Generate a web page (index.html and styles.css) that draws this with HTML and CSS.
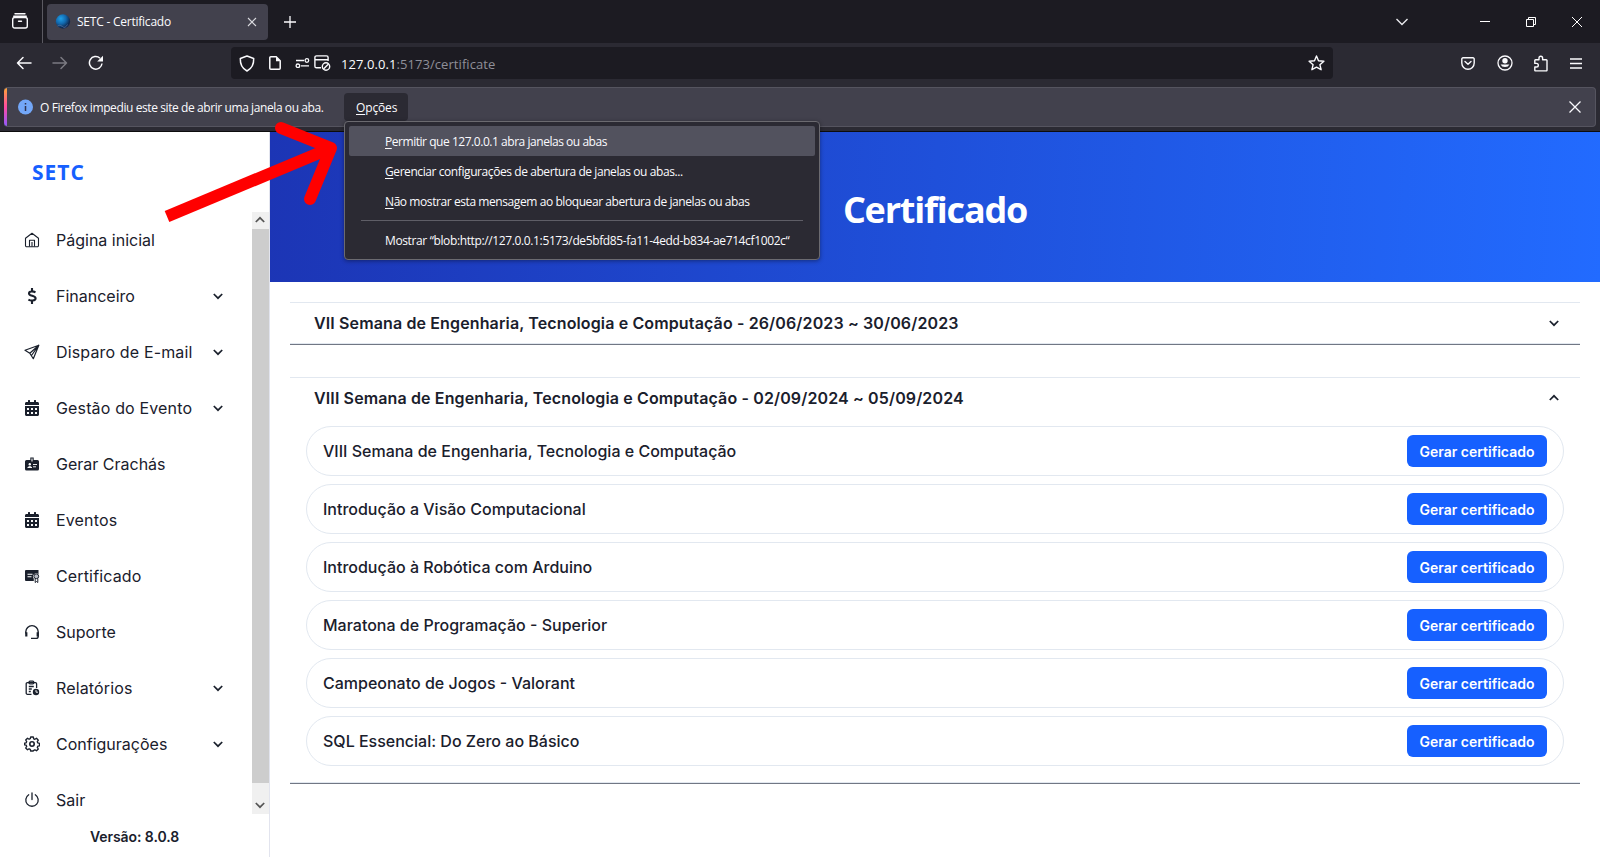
FILE: index.html
```html
<!DOCTYPE html>
<html lang="pt-BR">
<head>
<meta charset="utf-8">
<title>SETC - Certificado</title>
<link rel="stylesheet" href="styles.css">
</head>
<body>
<svg class="defs" width="0" height="0">
  <defs>
    <symbol id="chev" viewBox="0 0 12 12"><path d="M1.800 4l4.200 4.200L10.200 4" fill="none" stroke="currentColor" stroke-width="1.700"/></symbol>
    <symbol id="cal" viewBox="0 0 448 512"><path fill="currentColor" d="M0 464c0 26.500 21.500 48 48 48h352c26.500 0 48-21.500 48-48V192H0v272zm320-196c0-6.600 5.400-12 12-12h40c6.600 0 12 5.400 12 12v40c0 6.600-5.400 12-12 12h-40c-6.600 0-12-5.400-12-12v-40zm0 128c0-6.600 5.400-12 12-12h40c6.600 0 12 5.400 12 12v40c0 6.600-5.400 12-12 12h-40c-6.600 0-12-5.400-12-12v-40zM192 268c0-6.600 5.400-12 12-12h40c6.600 0 12 5.400 12 12v40c0 6.600-5.400 12-12 12h-40c-6.600 0-12-5.400-12-12v-40zm0 128c0-6.600 5.400-12 12-12h40c6.600 0 12 5.400 12 12v40c0 6.600-5.400 12-12 12h-40c-6.600 0-12-5.400-12-12v-40zM64 268c0-6.600 5.400-12 12-12h40c6.600 0 12 5.400 12 12v40c0 6.600-5.400 12-12 12H76c-6.600 0-12-5.400-12-12v-40zm0 128c0-6.600 5.400-12 12-12h40c6.600 0 12 5.400 12 12v40c0 6.600-5.400 12-12 12H76c-6.600 0-12-5.400-12-12v-40zM400 64h-48V16c0-8.800-7.200-16-16-16h-32c-8.800 0-16 7.200-16 16v48H160V16c0-8.800-7.200-16-16-16h-32c-8.800 0-16 7.200-16 16v48H48C21.500 64 0 85.500 0 112v48h448v-48c0-26.500-21.500-48-48-48z"/></symbol>
  </defs>
</svg>

<div class="browser">
  <div class="tabbar">
    <div class="view-btn">
      <svg width="18" height="18" viewBox="0 0 18 18" fill="none" stroke="#fbfbfe" stroke-width="1.400" stroke-linecap="round"><path d="M4 1.700h10M2.700 4.200h12.600"/><rect x="1.700" y="5.500" width="14.600" height="10.500" rx="2"/><path d="M7.500 9.200h3"/></svg>
    </div>
    <div class="tab">
      <svg width="16" height="16" viewBox="0 0 16 16"><defs><radialGradient id="fav" cx=".35" cy=".3" r=".8"><stop offset="0" stop-color="#1fa0e8"/><stop offset=".45" stop-color="#1268ad"/><stop offset=".8" stop-color="#10294f"/><stop offset="1" stop-color="#1c2c55"/></radialGradient></defs><circle cx="8" cy="7.500" r="7.200" fill="url(#fav)"/><path d="M2.500 12q2.500-2 5 .5t5-2" fill="none" stroke="#4d6fa0" stroke-width=".8"/></svg>
      <span class="tab-title">SETC - Certificado</span>
      <svg class="tab-close" width="10" height="10" viewBox="0 0 10 10"><path d="M1 1l8 8M9 1l-8 8" stroke="#d9d9de" stroke-width="1.100"/></svg>
    </div>
    <svg class="tab-new" width="12" height="12" viewBox="0 0 12 12"><path d="M6 0v12M0 6h12" stroke="#fbfbfe" stroke-width="1.300"/></svg>
    <div class="win-btns">
      <svg width="14" height="8" viewBox="0 0 14 8"><path d="M1.500 1L7 6.500 12.500 1" fill="none" stroke="#e8e8ec" stroke-width="1.400"/></svg>
      <svg class="min" width="10" height="10" viewBox="0 0 10 10"><path d="M0 4.500h10" stroke="#fff"/></svg>
      <svg class="max" width="10" height="10" viewBox="0 0 10 10" fill="none" stroke="#fff"><path d="M.5 2.500h7v7h-7zM2.500 2V.5h7v7H8"/></svg>
      <svg class="cls" width="10" height="10" viewBox="0 0 10 10"><path d="M0 0l10 10M10 0L0 10" stroke="#fff"/></svg>
    </div>
  </div>

  <div class="toolbar">
    <div class="nav-btns">
      <svg width="16" height="14" viewBox="0 0 16 14" fill="none" stroke="#fbfbfe" stroke-width="1.500" stroke-linejoin="round" stroke-linecap="round"><path d="M15 7H1.500M7 1.500L1.500 7 7 12.500"/></svg>
      <svg width="16" height="14" viewBox="0 0 16 14" fill="none" stroke="#7b7a82" stroke-width="1.500" stroke-linejoin="round" stroke-linecap="round"><path d="M1 7h13.500M9 1.500L14.500 7 9 12.500"/></svg>
      <svg width="16" height="16" viewBox="0 0 16 16"><path d="M14 8.500A6.300 6.300 0 1 1 12 3.200" fill="none" stroke="#fbfbfe" stroke-width="1.500"/><path d="M15 .8v5.800H9.200z" fill="#fbfbfe"/></svg>
    </div>
    <div class="urlbar">
      <svg class="u1" width="16" height="17" viewBox="0 0 16 17" fill="none" stroke="#fbfbfe" stroke-width="1.500" stroke-linejoin="round"><path d="M8 1L1.300 3.500c-.2 5 1 9.500 6.700 12.500 5.700-3 6.900-7.500 6.700-12.500z"/></svg>
      <svg class="u2" width="12" height="14" viewBox="0 0 12 14"><path d="M1.800.8h5.400l4 4v7.400a1 1 0 0 1-1 1H1.800a1 1 0 0 1-1-1V1.800a1 1 0 0 1 1-1z" fill="none" stroke="#fbfbfe" stroke-width="1.500"/><path d="M7 .8v4.400h4.400z" fill="#fbfbfe"/></svg>
      <svg class="u3" width="15" height="10" viewBox="0 0 15 10" fill="none" stroke="#fbfbfe" stroke-width="1.300"><path d="M1 2.500h8M6 7.800h8"/><circle cx="11.900" cy="2.500" r="1.800"/><circle cx="2.900" cy="7.800" r="1.800"/></svg>
      <svg class="u4" width="17" height="16" viewBox="0 0 17 16" fill="none" stroke="#fbfbfe" stroke-width="1.400"><path d="M7 12.800H2.500a1.600 1.600 0 0 1-1.600-1.600V2.500A1.600 1.600 0 0 1 2.500.9h10a1.600 1.600 0 0 1 1.600 1.600V6M1 4.800h13"/><circle cx="12" cy="11.500" r="3.700"/><path d="M9.500 14l5-5"/></svg>
      <span class="url"><b>127.0.0.1</b>:5173/certificate</span>
      <svg class="star" width="17" height="16" viewBox="0 0 17 16" fill="none" stroke="#fbfbfe" stroke-width="1.400" stroke-linejoin="round"><path d="M8.500 1l2 4.700 5.400.5-4 3.500 1.200 5-4.600-2.600-4.600 2.600 1.200-5-4-3.500 5.400-.5z"/></svg>
    </div>
    <div class="tools">
      <svg width="14" height="13" viewBox="0 0 14 13" fill="none" stroke="#fbfbfe" stroke-width="1.400" stroke-linejoin="round" stroke-linecap="round"><path d="M2 .8h10a1.200 1.200 0 0 1 1.200 1.200v4A6.200 6.200 0 0 1 .8 6V2A1.200 1.200 0 0 1 2 .8z"/><path d="M4 4.500l3 2.800 3-2.800"/></svg>
      <svg width="16" height="16" viewBox="0 0 16 16"><circle cx="8" cy="8" r="7" fill="none" stroke="#fbfbfe" stroke-width="1.300"/><circle cx="8" cy="5.800" r="2.700" fill="#fbfbfe"/><path d="M3.600 9.500h8.800a4.700 4 0 0 1-8.800 0z" fill="#fbfbfe"/></svg>
      <svg width="14" height="17" viewBox="0 0 14 17" fill="none" stroke="#fbfbfe" stroke-width="1.400" stroke-linejoin="round"><path d="M1.500 4.700H5V3a1.800 1.800 0 0 1 3.600 0v1.700h3.700a.7.7 0 0 1 .7.7v9.800a.7.700 0 0 1-.7.7H1.500a.7.700 0 0 1-.7-.7V12h1.700a1.800 1.800 0 0 0 0-3.600H.8v-3a.7.700 0 0 1 .7-.7z"/></svg>
      <svg width="12" height="11" viewBox="0 0 12 11"><path d="M0 1h12M0 5.500h12M0 10h12" stroke="#fbfbfe" stroke-width="1.300"/></svg>
    </div>
  </div>

  <div class="notice-wrap">
    <div class="notice">
      <svg class="info" width="15" height="16" viewBox="0 0 15 16"><circle cx="7.500" cy="8" r="7.500" fill="#73a7f8"/><path d="M7.500 7v5M7.500 4v1.600" stroke="#2f3350" stroke-width="1.500"/></svg>
      <span class="notice-text">O Firefox impediu este site de abrir uma janela ou aba.</span>
      <div class="options"><span><u>O</u>pções</span>
        <div class="menu">
          <div class="mi on"><span class="m1"><u>P</u>ermitir que 127.0.0.1 abra janelas ou abas</span></div>
          <div class="mi"><span class="m2"><u>G</u>erenciar configurações de abertura de janelas ou abas...</span></div>
          <div class="mi"><span class="m3"><u>N</u>ão mostrar esta mensagem ao bloquear abertura de janelas ou abas</span></div>
          <div class="sep"></div>
          <div class="mi"><span class="m4">Mostrar “blob:http://127.0.0.1:5173/de5bfd85-fa11-4edd-b834-ae714cf1002c“</span></div>
        </div>
      </div>
      <svg class="notice-close" width="12" height="12" viewBox="0 0 12 12"><path d="M.5.5l11 11M11.500.5l-11 11" stroke="#fbfbfe" stroke-width="1.300"/></svg>
    </div>
  </div>
</div>

<div class="app">
  <aside class="side">
    <div class="logo">SETC</div>
    <div class="scroller">
      <nav class="nav">
        <a class="item"><svg width="16" height="16" viewBox="0 0 16 16" fill="none" stroke="currentColor" stroke-width="1.100" stroke-linejoin="round"><path d="M1.500 6.200L8 1.200l6.500 5v7.300a1.200 1.200 0 0 1-1.200 1.200H2.700a1.200 1.200 0 0 1-1.200-1.200z"/><path d="M5.500 14.500V8.200h5v6.300M8 10v4.500" /></svg><span>Página inicial</span></a>
        <a class="item"><svg width="16" height="16" viewBox="0 0 16 16" fill="none" stroke="currentColor" stroke-width="2.100"><path d="M11.500 4.300C9.500 3.200 5 2.700 5 5.400c0 2.800 6.600 1.900 6.600 4.900 0 3-5 2.600-7.200 1.300M8 0v3M8 13v3"/></svg><span>Financeiro</span><svg class="ch" width="12" height="12"><use href="#chev"/></svg></a>
        <a class="item wide"><svg width="16" height="16" viewBox="0 0 16 16" fill="none" stroke="currentColor" stroke-width="1.200" stroke-linejoin="round"><path d="M14.800 1.200L1 6.200l4.800 3 3.500 5.500zM14.800 1.200l-9 8M14.800 1.200L7.500 11.500"/></svg><span>Disparo de E-mail</span><svg class="ch" width="12" height="12"><use href="#chev"/></svg></a>
        <a class="item wide"><svg width="16" height="16"><use href="#cal"/></svg><span>Gestão do Evento</span><svg class="ch" width="12" height="12"><use href="#chev"/></svg></a>
        <a class="item"><svg width="16" height="16" viewBox="0 0 16 16"><path fill="currentColor" d="M6.300 1.500h3.400V4h3.800A1.500 1.500 0 0 1 15 5.500V13a1.500 1.500 0 0 1-1.500 1.500h-11A1.500 1.500 0 0 1 1 13V5.500A1.500 1.500 0 0 1 2.500 4h3.800z"/><path d="M8 2.500v3" stroke="#fff" stroke-width="1.100"/><circle cx="5.800" cy="8.300" r="1.200" fill="#fff"/><path d="M3.700 11.500q2.100-2 4.200 0zM9 8.500h4M9 10.800h3" fill="#fff" stroke="#fff" stroke-width=".9"/></svg><span>Gerar Crachás</span></a>
        <a class="item wide"><svg width="16" height="16"><use href="#cal"/></svg><span>Eventos</span></a>
        <a class="item wide"><svg width="16" height="16" viewBox="0 0 16 16"><path fill="currentColor" d="M2 2h12.500v4.200a3.300 3.300 0 0 0-4.700 4.600V13H2a1 1 0 0 1-1-1V3a1 1 0 0 1 1-1z"/><path d="M3.500 6.200h5M3.500 8.800h4" stroke="#fff" stroke-width="1.100"/><circle cx="12.300" cy="8.300" r="2.400" fill="#b9bdc6" stroke="currentColor" stroke-width="1"/><path d="M11.200 10.500v4l1.300-1 1.300 1v-4" fill="none" stroke="currentColor"/></svg><span>Certificado</span></a>
        <a class="item"><svg width="16" height="16" viewBox="0 0 16 16" fill="none" stroke="currentColor" stroke-width="1.400"><path d="M1.800 9.500V7.800a6.200 6.200 0 0 1 12.400 0v4.400a2.200 2.200 0 0 1-2.200 2.200H7"/><path d="M2.300 8.200v4.200M13.700 8.200v4.200" stroke-width="2.200"/></svg><span>Suporte</span></a>
        <a class="item wide"><svg width="16" height="16" viewBox="0 0 16 16" fill="none" stroke="currentColor" stroke-width="1.300"><path d="M7.500 14.300H3.400A1.200 1.200 0 0 1 2.200 13V3.800a1.200 1.200 0 0 1 1.200-1.200h8a1.200 1.200 0 0 1 1.200 1.200V8"/><rect x="5" y="1.200" width="4.800" height="2.600" rx="1"/><path d="M4.800 6.500h5M4.800 9h3M4.800 11.500h2"/><circle cx="12" cy="12" r="3.200" fill="currentColor" stroke="none"/><path d="M12 10v2.200h2" stroke="#fff" stroke-width=".9"/></svg><span>Relatórios</span><svg class="ch" width="12" height="12"><use href="#chev"/></svg></a>
        <a class="item"><svg width="16" height="16" viewBox="0 0 16 16" fill="none" stroke="currentColor" stroke-width="1.350" stroke-linejoin="round"><path d="M6.700 1h2.600l.4 1.800 1.200.5 1.600-1 1.800 1.900-1 1.500.5 1.200 1.700.4v2.500l-1.700.4-.5 1.200 1 1.600-1.800 1.800-1.600-1-1.200.5L9.300 15H6.700l-.4-1.700-1.200-.5-1.600 1L1.700 12l1-1.600-.5-1.200L.6 8.800V7.200l1.600-.4.5-1.200-1-1.600 1.800-1.800 1.600 1 1.200-.5z"/><circle cx="8" cy="8" r="2.200" stroke-width="1.600"/></svg><span>Configurações</span><svg class="ch" width="12" height="12"><use href="#chev"/></svg></a>
        <a class="item"><svg width="16" height="16" viewBox="0 0 16 16" fill="none" stroke="currentColor" stroke-width="1.300" stroke-linecap="round"><path d="M8 1v6.500M4.700 2.800a6.200 6.200 0 1 0 6.600 0"/></svg><span>Sair</span></a>
      </nav>
      <div class="bar">
        <div class="bar-btn"><svg class="up" width="12" height="12"><use href="#chev"/></svg></div>
        <div class="thumb"></div>
        <div class="bar-end"><svg width="12" height="12"><use href="#chev"/></svg></div>
      </div>
    </div>
    <div class="version">Versão: 8.0.8</div>
  </aside>

  <main class="main">
    <header class="hero"><h1>Certificado</h1></header>
    <section class="acc">
      <div class="acc-head"><span>VII Semana de Engenharia, Tecnologia e Computação - 26/06/2023 ~ 30/06/2023</span><svg width="12" height="12"><use href="#chev"/></svg></div>
    </section>
    <section class="acc">
      <div class="acc-head"><span>VIII Semana de Engenharia, Tecnologia e Computação - 02/09/2024 ~ 05/09/2024</span><svg class="up" width="12" height="12"><use href="#chev"/></svg></div>
      <div class="rows">
        <div class="row"><span>VIII Semana de Engenharia, Tecnologia e Computação</span><button>Gerar certificado</button></div>
        <div class="row"><span>Introdução a Visão Computacional</span><button>Gerar certificado</button></div>
        <div class="row"><span>Introdução à Robótica com Arduino</span><button>Gerar certificado</button></div>
        <div class="row"><span>Maratona de Programação - Superior</span><button>Gerar certificado</button></div>
        <div class="row"><span>Campeonato de Jogos - Valorant</span><button>Gerar certificado</button></div>
        <div class="row"><span>SQL Essencial: Do Zero ao Básico</span><button>Gerar certificado</button></div>
      </div>
    </section>
  </main>
</div>

<svg class="arrow" width="190" height="110" viewBox="155 115 190 110" fill="none" stroke="#f00" stroke-width="12"><path d="M167 216.500L331 148"/><path d="M281 128l50 20-21 51" stroke-linecap="round" stroke-linejoin="round"/></svg>
</body>
</html>
```
FILE: styles.css
```css
* { box-sizing: border-box; }
body {
  margin: 0;
  width: 1600px;
  height: 857px;
  overflow: hidden;
  background: #fff;
  color: #1a202c;
  font-family: Inter, "Liberation Sans", sans-serif;
  font-size: 16px;
}
svg { display: block; flex: none; }
.defs { position: absolute; }

/* Browser chrome */
.browser {
  height: 132px;
  background: #2b2a33;
  border-bottom: 1px solid #0c0c0d;
  color: #fbfbfe;
  font-family: "Open Sans", "Noto Sans", sans-serif;
  font-size: 12px;
}
.tabbar { display: flex; align-items: center; height: 43px; background: #1c1b22; }
.view-btn { width: 43px; height: 43px; padding: 12px 0 0 11px; border-right: 1px solid #5b5a62; }
.tab {
  display: flex; align-items: center;
  width: 221px; height: 36px; margin-left: 4px; padding: 0 11px 0 8px;
  background: #42414d; border-radius: 4px;
}
.tab-title { margin-left: 6px; white-space: nowrap; letter-spacing: -.23px; }
.tab-close { margin-left: auto; }
.tab-new { margin-left: 16px; }
.win-btns { display: flex; align-items: center; margin-left: auto; padding-right: 18px; }
.min { margin-left: 71px; }
.max { margin-left: 36px; }
.cls { margin-left: 36px; }

.toolbar { display: flex; align-items: center; height: 44px; padding-top: 1px; }
.nav-btns { display: flex; align-items: center; gap: 20px; width: 231px; padding-left: 16px; }
.urlbar {
  display: flex; align-items: center;
  width: 1102px; height: 32px; padding: 0 8px;
  background: #1c1b22; border-radius: 4px;
}
.nav-btns, .urlbar, .tools { margin-top: -5px; }
.u2 { margin-left: 14px; }
.u3 { margin-left: 14px; }
.u4 { margin-left: 4px; }
.url { margin-left: 10px; padding-top: 1px; font-size: 13px; letter-spacing: .07px; color: #8f8f98; white-space: nowrap; }
.url b { font-weight: 400; color: #fbfbfe; }
.star { margin-left: auto; }
.tools { display: flex; align-items: center; justify-content: space-between; width: 121px; margin-left: 128px; }

.notice-wrap { padding: 0 4px; }
.notice {
  display: flex; align-items: center; height: 40px; padding: 0 14px;
  background: #42414d; border: 1px solid #55545f; border-left: 0; border-radius: 4px;
  background-image: linear-gradient(#ffa436, #ff4aa2 50%, #9059ff);
  background-size: 3px 100%; background-repeat: no-repeat;
}
.notice-text { width: 304px; margin-left: 7px; white-space: nowrap; letter-spacing: -.41px; }
.options {
  position: relative; display: flex; align-items: center;
  height: 28px; width: 64px; padding-left: 12px; background: #2b2a33; border-radius: 4px;
  letter-spacing: -.15px;
}
.notice-close { margin-left: auto; }
u { text-underline-offset: 2px; text-decoration-thickness: 1px; }
.menu {
  position: absolute; left: 0; top: 28px; z-index: 2;
  width: 476px; height: 139px; padding: 4px;
  background: #2b2a33; border: 1px solid #6b6a70; border-radius: 4px;
  box-shadow: 0 1px 4px rgba(0, 0, 0, .4);
}
.mi { display: flex; align-items: center; height: 30px; padding-left: 36px; white-space: nowrap; }
.mi.on { background: #52525e; border-radius: 2px; }
.m1 { letter-spacing: -.46px; }
.m2, .m3 { letter-spacing: -.42px; }
.m4 { letter-spacing: -.37px; }
.sep { height: 1px; margin: 4px 12px; background: #5f5e67; }

/* Application */
.app { display: flex; height: 725px; }
.side { display: flex; flex-direction: column; width: 270px; border-right: 1px solid #e2e4ee; }
.logo {
  height: 80px; padding: 24px 0 0 32px;
  font: 700 21px/32px "Open Sans", "Noto Sans", sans-serif; letter-spacing: 1px; color: #1660ff;
}
.scroller { display: flex; justify-content: space-between; height: 602px; overflow: hidden; }
.nav { width: 252px; }
.item { display: flex; align-items: center; height: 56px; padding: 0 28px 0 24px; white-space: nowrap; }
.item span { margin-left: 16px; }
.wide { letter-spacing: .15px; }
.ch { margin-left: auto; }
.bar { display: flex; flex-direction: column; width: 17px; background: #f0f0f0; color: #555; }
.bar-btn { height: 17px; padding: 2px; }
.thumb { height: 554px; background: #cdcdcd; }
.bar-end { flex: 1; padding: 16px 2px 0; }
.up { transform: rotate(180deg); }
.version { padding-top: 14px; font-size: 14px; line-height: 18px; font-weight: 600; letter-spacing: -.07px; text-align: center; }

.main { flex: 1; }
.hero {
  display: flex; align-items: center; justify-content: center; height: 150px; padding-top: 5px;
  background: linear-gradient(93deg, #1c35b5, #226bff);
  color: #fff;
}
.hero h1 { margin: 0; font: 700 36px/48px "Open Sans", "Noto Sans", sans-serif; letter-spacing: -1.2px; white-space: nowrap; }
.acc {
  margin: 20px 20px 0; border-top: 1px solid #e2e8f0; border-bottom: 1px solid #717784;
  box-shadow: inset 0 -1px #e2e8f0;
}
.acc + .acc { margin-top: 32px; }
.acc-head {
  display: flex; align-items: center; justify-content: space-between;
  height: 41px; padding: 0 20px 1px 24px; font-weight: 600; letter-spacing: .13px; white-space: nowrap;
}
.rows { display: flex; flex-direction: column; gap: 8px; padding: 7px 16px 17px; }
.row {
  display: flex; align-items: center; justify-content: space-between;
  height: 50px; padding: 0 16px; border: 1px solid #e2e8f0; border-radius: 25px; font-weight: 500;
}
.row button {
  width: 140px; height: 32px; padding: 1px 0 0; border: 0; border-radius: 6px;
  background: #1660ff; color: #fff; font: 600 14px Inter, sans-serif; white-space: nowrap;
}
.arrow { position: absolute; left: 155px; top: 115px; z-index: 3; }
```
